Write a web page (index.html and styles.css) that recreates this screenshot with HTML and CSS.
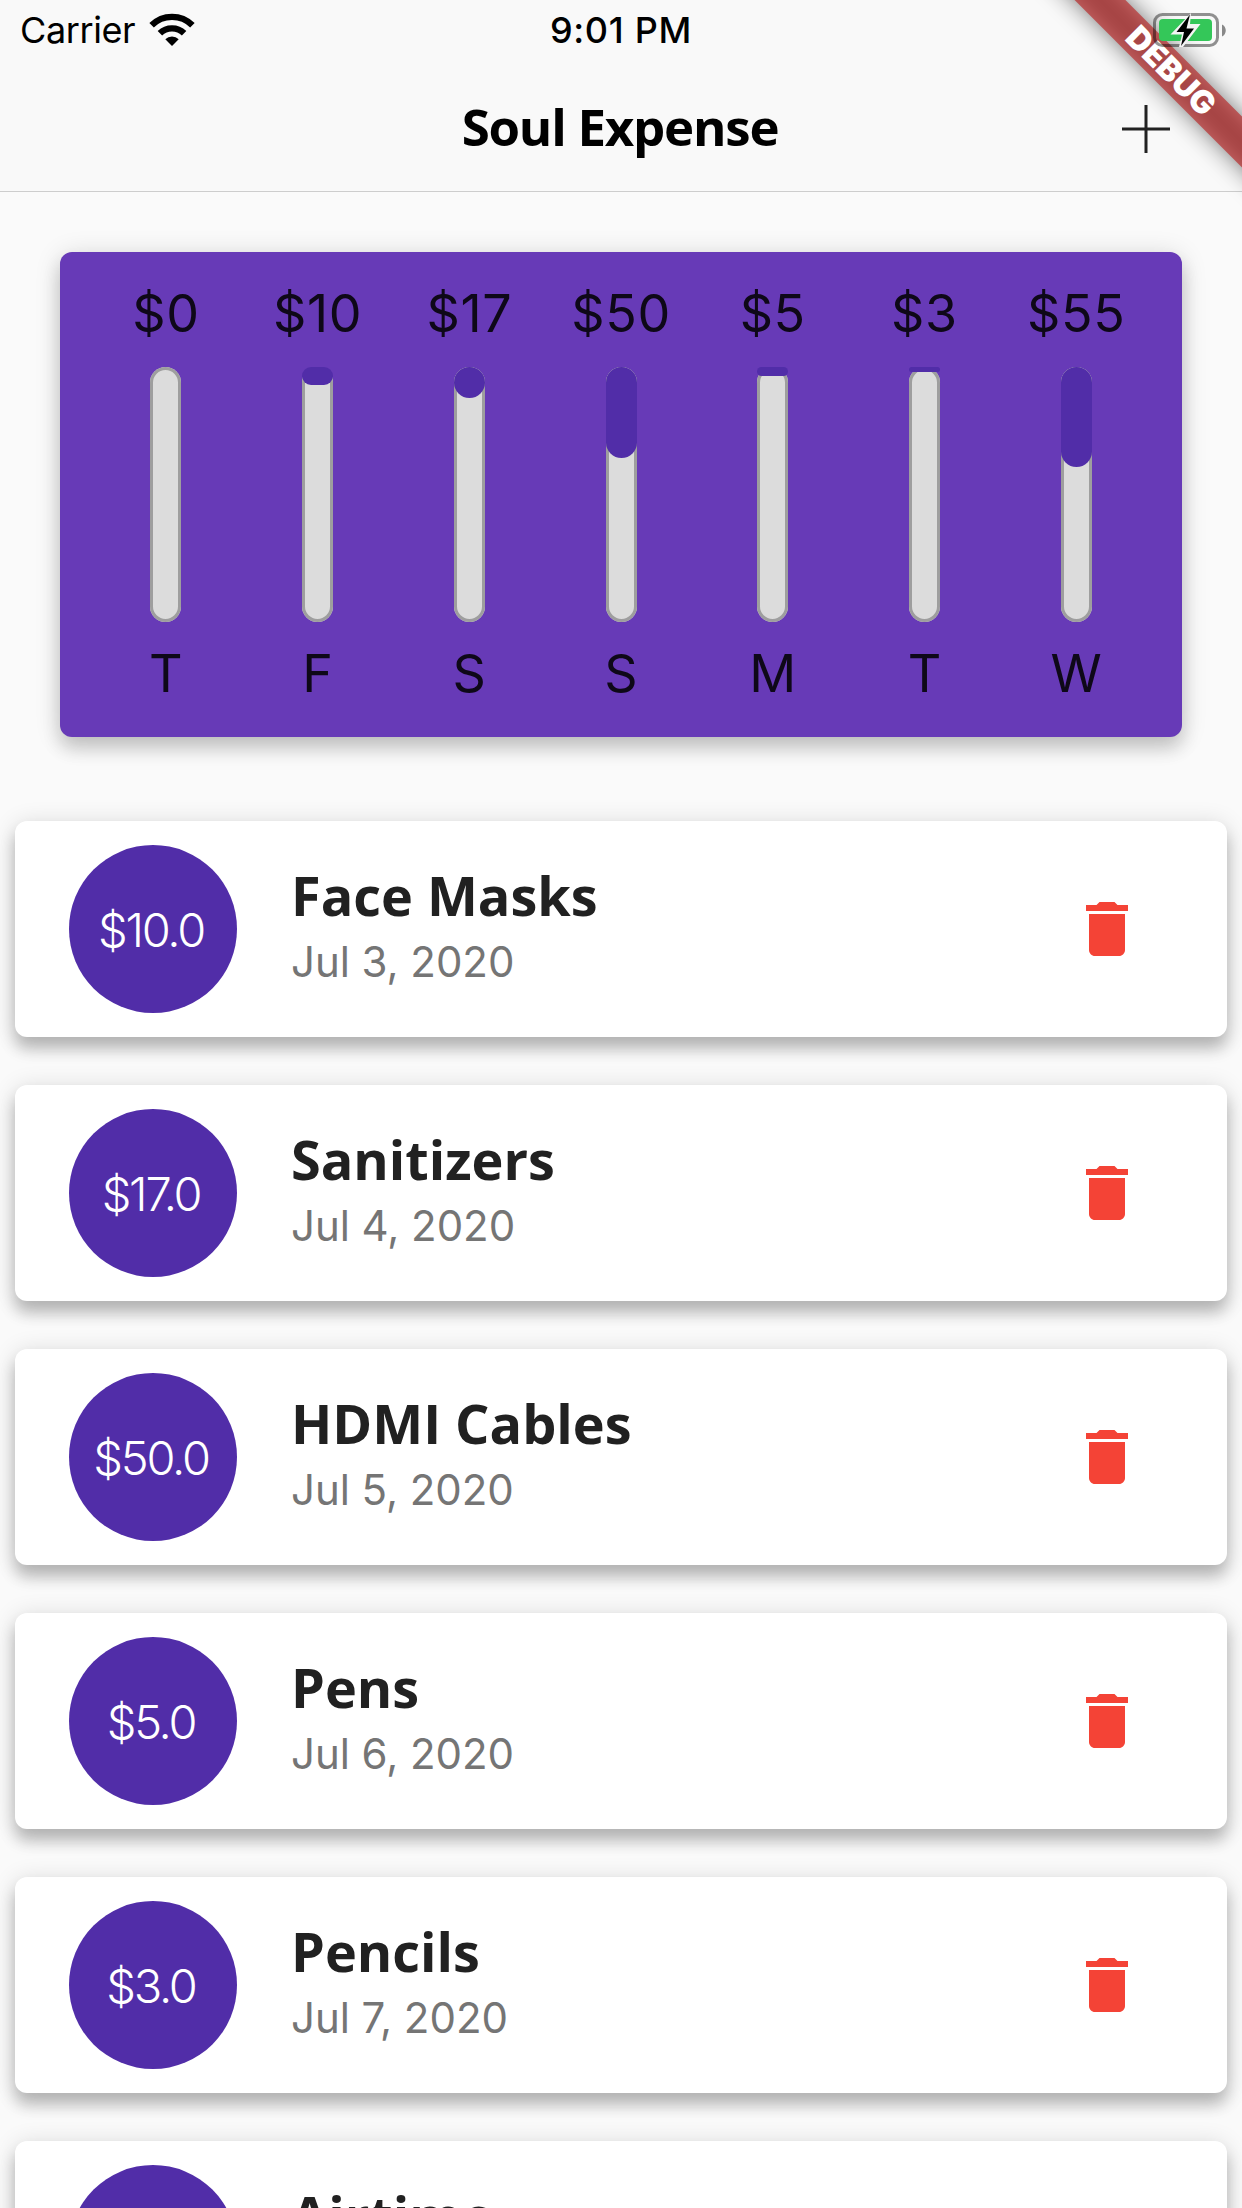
FILE: index.html
```html
<!DOCTYPE html>
<html lang="en">
<head>
<meta charset="utf-8">
<title>Soul Expense</title>
<link rel="stylesheet" href="styles.css">
</head>
<body>
<svg width="0" height="0" class="defs">
  <symbol id="trash" viewBox="0 0 24 24"><path d="M6 19c0 1.100.9 2 2 2h8c1.100 0 2-.9 2-2V7H6v12zM19 4h-3.500l-1-1h-5l-1 1H5v2h14V4z"/></symbol>
</svg>
<div class="screen">
  <header class="header">
    <div class="status">
      <div class="status-left">
        <span class="carrier">Carrier</span>
        <svg class="wifi" viewBox="0 0 46 34"><g fill="none" stroke="#000" stroke-width="6.400"><path d="M2.600 12.300A29 29 0 0 1 43.400 12.300"/><path d="M10.900 20.300A17.300 17.300 0 0 1 35.100 20.300"/></g><path d="M16.300 26.200a9.500 9.500 0 0 1 13.400 0L23 33z"/></svg>
      </div>
      <span class="time">9:01 PM</span>
      <svg class="battery" viewBox="0 0 74 36"><rect x="1.500" y="1.500" width="63" height="31" rx="8" fill="none" stroke="#000" stroke-opacity=".42" stroke-width="3"/><path d="M69 11.500c5 2 5 10 0 12z" fill-opacity=".45"/><rect x="6" y="6" width="53" height="22" rx="4" fill="#34c759"/><path d="M38 0L17.500 21.500H29L26 34h4L47.500 11H37z" fill="#f4f4f4"/><path d="M37 1.500L23.500 19h7.500L28 33 41 15.500h-7.500z"/></svg>
    </div>
    <div class="nav">
      <span></span>
      <h1 class="nav-title">Soul Expense</h1>
      <svg class="plus" viewBox="0 0 48 48"><path d="M24 0v48M0 24h48" stroke="#222" stroke-width="3"/></svg>
    </div>
  </header>

  <section class="chart">
    <div class="day"><span class="sum">$0</span><div class="bar"></div><span class="letter">T</span></div>
    <div class="day"><span class="sum">$10</span><div class="bar"><div class="fill" style="height:7.143%"></div></div><span class="letter">F</span></div>
    <div class="day"><span class="sum">$17</span><div class="bar"><div class="fill" style="height:12.143%"></div></div><span class="letter">S</span></div>
    <div class="day"><span class="sum">$50</span><div class="bar"><div class="fill" style="height:35.714%"></div></div><span class="letter">S</span></div>
    <div class="day"><span class="sum">$5</span><div class="bar"><div class="fill" style="height:3.571%"></div></div><span class="letter">M</span></div>
    <div class="day"><span class="sum">$3</span><div class="bar"><div class="fill" style="height:2.143%"></div></div><span class="letter">T</span></div>
    <div class="day"><span class="sum">$55</span><div class="bar"><div class="fill" style="height:39.286%"></div></div><span class="letter">W</span></div>
  </section>

  <main class="list">
    <article class="item"><div class="amount">$10.0</div><div class="info"><h2>Face Masks</h2><p>Jul 3, 2020</p></div><svg class="trash"><use href="#trash"/></svg></article>
    <article class="item"><div class="amount">$17.0</div><div class="info"><h2>Sanitizers</h2><p>Jul 4, 2020</p></div><svg class="trash"><use href="#trash"/></svg></article>
    <article class="item"><div class="amount">$50.0</div><div class="info"><h2>HDMI Cables</h2><p>Jul 5, 2020</p></div><svg class="trash"><use href="#trash"/></svg></article>
    <article class="item"><div class="amount">$5.0</div><div class="info"><h2>Pens</h2><p>Jul 6, 2020</p></div><svg class="trash"><use href="#trash"/></svg></article>
    <article class="item"><div class="amount">$3.0</div><div class="info"><h2>Pencils</h2><p>Jul 7, 2020</p></div><svg class="trash"><use href="#trash"/></svg></article>
    <article class="item"><div class="amount"></div><div class="info"><h2>Airtime</h2></div><svg class="trash"><use href="#trash"/></svg></article>
  </main>

  <div class="ribbon"><span>DEBUG</span></div>
</div>
</body>
</html>
```
FILE: styles.css
```css
* { box-sizing: border-box; }
body { margin: 0; background: #fafafa; color: #000; font-family: Inter, "Liberation Sans", sans-serif; }
h1, h2, p { margin: 0; }
.defs { position: absolute; }
.screen { position: relative; width: 1242px; height: 2208px; overflow: hidden; background: #fafafa; }

.header { height: 192px; background: #f9f9f9; border-bottom: 1px solid #cdcdcd; }
.status { display: grid; grid-template-columns: 1fr auto 1fr; height: 60px; align-items: center; font-size: 36px; line-height: 60px; padding: 0 15px 0 20px; }
.status-left { display: flex; align-items: center; gap: 14px; letter-spacing: -.4px; }
.wifi { width: 46px; height: 34px; }
.time { font-weight: 500; letter-spacing: .7px; margin-right: 5px; }
.battery { position: relative; z-index: 2; width: 74px; height: 36px; justify-self: end; margin-top: 2px; }
.nav { display: grid; grid-template-columns: 1fr auto 1fr; align-items: center; height: 131px; padding: 0 72px 0 70px; }
.nav-title { font: 700 51px/70px "Open Sans", sans-serif; letter-spacing: -1.230px; }
.plus { width: 48px; height: 48px; justify-self: end; margin-top: 6px; }

.chart { display: flex; margin: 60px 60px 0; height: 485px; padding: 32px 30px 0; border-radius: 12px; background: #673ab7; box-shadow: 0 12px 18px rgba(0,0,0,.16), 0 3px 27px rgba(0,0,0,.14); }
.day { flex: 1; display: flex; flex-direction: column; align-items: center; color: #0e0818; font-size: 52px; line-height: 60px; }
.sum { letter-spacing: .6px; }
.bar { width: 31px; height: 255px; margin: 23px 0 22px; border-radius: 30px; background: #dcdcdc; box-shadow: inset 0 0 0 3px #9e9e9e; }
.fill { background: #512da8; border-radius: 30px; }

.list { display: flex; flex-direction: column; gap: 48px; padding: 84px 15px 0; }
.item { display: flex; align-items: center; height: 216px; flex: none; padding: 0 84px 0 54px; background: #fff; border-radius: 12px; box-shadow: 0 12px 15px rgba(0,0,0,.22), 0 3px 24px rgba(0,0,0,.14); }
.amount { display: flex; align-items: center; justify-content: center; width: 168px; height: 168px; padding: 2px 4px 0 0; border-radius: 50%; background: #512da8; color: #fff; font: 300 47px/60px Inter, sans-serif; letter-spacing: -2.200px; }
.info { flex: 1; height: 130px; margin-left: 54px; }
.info h2 { font: 700 54px/66px "Open Sans", sans-serif; color: #212121; margin-top: -2px; }
.info p { font-size: 42px; line-height: 64px; color: #757575; letter-spacing: -.05px; margin-top: 2px; }
.trash { width: 72px; height: 72px; fill: #f44336; }

/* debug ribbon across the corner, above the page content */
.ribbon { position: absolute; left: 971px; top: 53px; width: 400px; height: 36px; transform: rotate(45deg); text-align: center; color: #fff; font: 900 32px/36px Inter, sans-serif; }
.ribbon::before, .ribbon::after { content: ""; position: absolute; inset: 0; z-index: -1; }
.ribbon::before { background: rgba(0,0,0,.5); filter: blur(12px); }
.ribbon::after { background: rgba(183,28,28,.63); }
```
